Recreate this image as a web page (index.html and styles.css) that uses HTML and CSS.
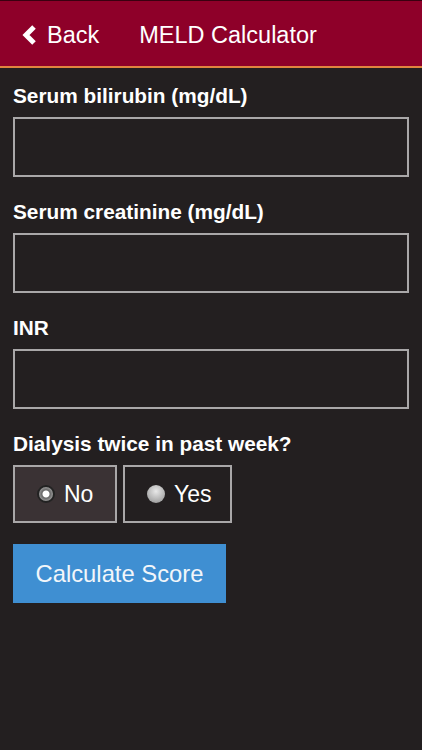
FILE: index.html
```html
<!DOCTYPE html>
<html lang="en">

<head>
    <meta charset="UTF-8">
    <meta name="viewport" content="width=device-width, initial-scale=1.0">
    <title>MELD Calculator</title>
    <link rel="stylesheet" href="styles.css">
</head>

<body>

    <header class="topbar">
        <a class="back" href="#">
            <svg class="chevron" width="15" height="20" viewBox="0 0 15 20">
                <path d="M12 2 L4 10 L12 18" fill="none" stroke="#fff" stroke-width="5" stroke-linejoin="miter" />
            </svg>
            <span>Back</span>
        </a>
        <h1 class="title">MELD Calculator</h1>
    </header>

    <main class="form">
        <label class="field-label" for="bilirubin">Serum bilirubin (mg/dL)</label>
        <input class="field" type="text" id="bilirubin">

        <label class="field-label" for="creatinine">Serum creatinine (mg/dL)</label>
        <input class="field" type="text" id="creatinine">

        <label class="field-label" for="inr">INR</label>
        <input class="field" type="text" id="inr">

        <div class="field-label">Dialysis twice in past week?</div>
        <div class="choices">
            <div class="choice choice-no selected">
                <span class="radio on"></span>
                <span>No</span>
            </div>
            <div class="choice choice-yes">
                <span class="radio"></span>
                <span>Yes</span>
            </div>
        </div>

        <button class="calc" type="button">Calculate Score</button>
    </main>

</body>

</html>
```

FILE: styles.css
```css
body {
    margin: 0;
    padding: 0;
    height: 750px;
    background-color: #231f20;
    font-family: "Liberation Sans", Arial, sans-serif;
    color: #fff;
}

.topbar {
    height: 62px;
    display: flex;
    align-items: center;
    padding: 3px 0 0 22px;
    background-color: #8e0029;
    border-top: 1px solid #3a0010;
    border-bottom: 2px solid #e0843f;
    box-sizing: content-box;
}

.back {
    display: flex;
    align-items: center;
    gap: 10px;
    color: #fff;
    text-decoration: none;
    font-size: 23.5px;
}

.title {
    margin: 0 0 0 40px;
    font-size: 23.5px;
    font-weight: normal;
}

.form {
    display: flex;
    flex-direction: column;
    align-items: flex-start;
    padding: 16px 13px 0;
}

.field-label {
    font-size: 20.8px;
    font-weight: bold;
    line-height: 24px;
    margin-bottom: 9px;
}

.field {
    width: 396px;
    height: 60px;
    box-sizing: border-box;
    margin: 0 0 23px;
    border: 2px solid #a9a7a8;
    background-color: #231f20;
    color: #fff;
    font-size: 20px;
    padding: 0 10px;
}

.choices {
    display: flex;
    gap: 6px;
    margin-bottom: 21px;
}

.choice {
    height: 58px;
    box-sizing: border-box;
    display: flex;
    align-items: center;
    gap: 9px;
    padding: 0 0 0 22px;
    border: 2px solid #a9a7a8;
    font-size: 23px;
}

.choice-no {
    width: 104px;
}

.choice-yes {
    width: 109px;
}

.choice.selected {
    background-color: #3a3234;
}

.radio {
    width: 18px;
    height: 18px;
    border-radius: 50%;
    box-sizing: border-box;
    background: radial-gradient(circle at 50% 35%, #e8e8e8, #8d8d8d);
}

.radio.on {
    border: 2px solid #222;
    background: radial-gradient(circle, #fff 0 3px, #666 4px, #bdbdbd 9px);
}

.calc {
    width: 213px;
    height: 59px;
    border: none;
    background-color: #3f8fd2;
    color: #f2f6fa;
    font-family: "Liberation Sans", Arial, sans-serif;
    font-size: 23.8px;
    cursor: pointer;
}
```
